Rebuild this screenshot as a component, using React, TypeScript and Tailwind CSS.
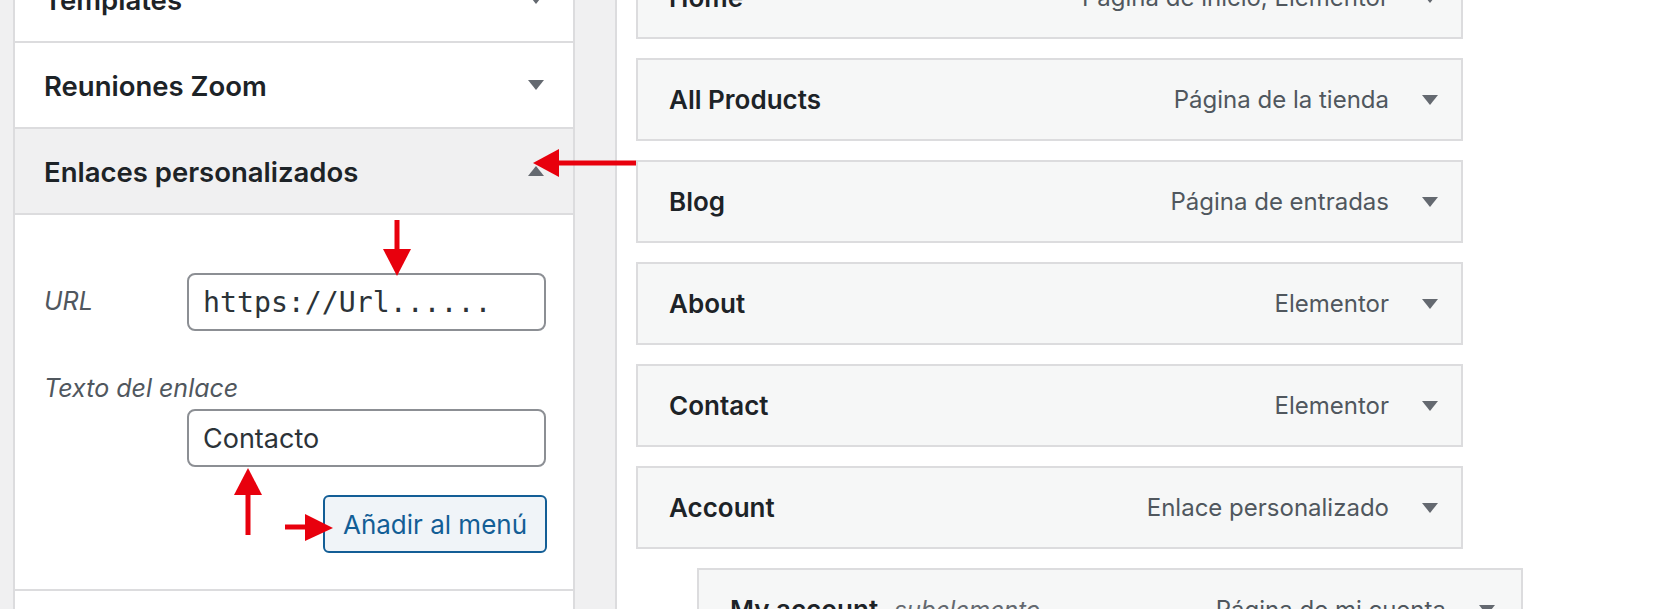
import React from 'react';

const Tri = ({ up = false, className = '' }: { up?: boolean; className?: string }) => (
  <svg width="16" height="10" viewBox="0 0 16 10" className={`shrink-0 ${className}`}>
    <polygon points={up ? '8,0 16,10 0,10' : '0,0 16,0 8,10'} fill="#646970" />
  </svg>
);

const SideRow = ({ title, open = false }: { title: string; open?: boolean }) => (
  <div
    className={`flex h-[86px] items-center justify-between border-b-2 border-[#dcdcde] pl-[29px] pr-[29px] ${
      open ? 'bg-[#f0f0f1]' : 'bg-white'
    }`}
  >
    <h3 className="pt-[4px] text-[27.5px] font-semibold text-[#1d2327]">{title}</h3>
    <Tri up={open} />
  </div>
);

interface CardProps {
  title: string;
  type: string;
  sub?: boolean;
}

const MenuCard = ({ title, type, sub }: CardProps) => (
  <div
    className={`flex h-[83px] shrink-0 items-center border-2 border-[#dcdcde] bg-[#f6f7f7] pl-[31px] ${
      sub ? 'ml-[61px] w-[826px] pr-[26px]' : 'w-[827px] pr-[23px]'
    }`}
  >
    <span className="text-[26px] font-semibold text-[#1d2327]">{title}</span>
    {sub && <span className="ml-[16px] text-[24px] italic text-[#646970]">subelemento</span>}
    <span className="ml-auto text-[24px] text-[#50575e]">{type}</span>
    <Tri className="ml-[33px]" />
  </div>
);

const items: CardProps[] = [
  { title: 'Home', type: 'Página de inicio, Elementor' },
  { title: 'All Products', type: 'Página de la tienda' },
  { title: 'Blog', type: 'Página de entradas' },
  { title: 'About', type: 'Elementor' },
  { title: 'Contact', type: 'Elementor' },
  { title: 'Account', type: 'Enlace personalizado' },
  { title: 'My account', type: 'Página de mi cuenta', sub: true },
];

export default function App() {
  return (
    <div className="relative flex h-[609px] w-[1660px] overflow-hidden bg-[#f0f0f1] font-['Inter','Noto_Sans',sans-serif]">
      {/* left column: accordion of item sources */}
      <div className="mt-[-43px] ml-[13px] w-[562px] shrink-0 self-start border-x-2 border-[#dcdcde] bg-white">
        <SideRow title="Templates" />
        <SideRow title="Reuniones Zoom" />
        <SideRow title="Enlaces personalizados" open />
        <div className="h-[376px] border-b-2 border-[#dcdcde] pt-[58px] pl-[29px]">
          <div className="flex w-[503px] flex-col">
            <div className="flex items-center">
              <label className="w-[143px] text-[25px] italic text-[#50575e]">URL</label>
              <input
                readOnly
                defaultValue="https://Url......"
                className="h-[58px] w-[359px] rounded-[8px] border-2 border-[#8c8f94] bg-white pl-[14px] font-['DejaVu_Sans_Mono',monospace] text-[28.2px] text-[#2c3338] outline-none"
              />
            </div>
            <label className="mt-[45px] text-[25px] leading-[25px] italic text-[#50575e]">Texto del enlace</label>
            <input
              readOnly
              defaultValue="Contacto"
              className="mt-[8px] ml-[143px] h-[58px] w-[359px] rounded-[8px] border-2 border-[#8c8f94] bg-white pl-[14px] text-[27px] text-[#2c3338] outline-none"
            />
            <button className="mt-[28px] ml-auto h-[58px] w-[224px] rounded-[6px] border-2 border-[#135e96] bg-[#f0f4f8] text-[26px] text-[#135e96]">
              Añadir al menú
            </button>
          </div>
        </div>
        <div className="h-[80px] bg-white" />
      </div>

      {/* right column: menu structure */}
      <div className="ml-[40px] flex-1 overflow-hidden border-l-2 border-[#dcdcde] bg-white pl-[19px]">
        <div className="mt-[-44px] flex flex-col gap-[19px]">
          {items.map((it) => (
            <MenuCard key={it.title} {...it} />
          ))}
        </div>
      </div>

      {/* red annotation arrows */}
      <svg className="pointer-events-none absolute inset-0" width="1660" height="609">
        <g fill="#e8000d" stroke="#e8000d" strokeWidth="5">
          <line x1="636" y1="163" x2="556" y2="163" />
          <polygon points="533,163 559,149 559,177" stroke="none" />
          <line x1="397" y1="220" x2="397" y2="252" />
          <polygon points="383,249 411,249 397,276" stroke="none" />
          <line x1="248" y1="492" x2="248" y2="535" />
          <polygon points="248,468 234,495 262,495" stroke="none" />
          <line x1="285" y1="527" x2="308" y2="527" />
          <polygon points="305,514 333,528 305,541" stroke="none" />
        </g>
      </svg>
    </div>
  );
}
